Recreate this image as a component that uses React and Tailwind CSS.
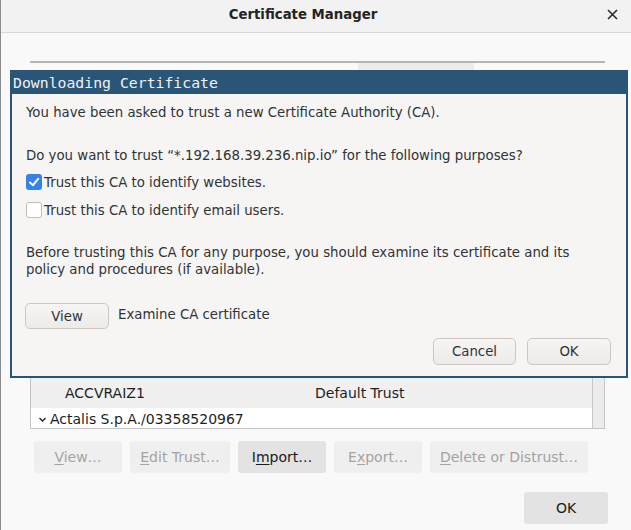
import React from "react";

const sans = { fontFamily: "'DejaVu Sans', 'Liberation Sans', sans-serif" };

const Mnemonic = ({ before, letter, after }) => (
  <span>
    {before}
    <span className="underline underline-offset-2">{letter}</span>
    {after}
  </span>
);

const ToolButton = ({ width, enabled, children }) => (
  <div
    className={`h-[32px] flex items-center justify-center rounded-[3px] text-[14px] ${width} ${
      enabled ? "bg-[#e3e3e3] text-[#1a1a1a]" : "bg-[#efefef] text-[#a3a3a3]"
    }`}
  >
    {children}
  </div>
);

const DialogButton = ({ width, children }) => (
  <div
    className={`flex items-center justify-center rounded-[5px] border border-[#cdc7c2] bg-gradient-to-b from-[#f6f5f4] to-[#edebe9] text-[#2e3436] text-[13.3px] ${width}`}
  >
    {children}
  </div>
);

const CheckRow = ({ checked, label }) => (
  <div className="flex items-center h-[20px]">
    {checked ? (
      <div className="w-[16px] h-[16px] rounded-[3px] bg-[#3584e4] flex items-center justify-center">
        <svg width="12" height="12" viewBox="0 0 12 12">
          <path d="M2 6.5 L5 9.2 L10.2 2.8" fill="none" stroke="white" strokeWidth="2" strokeLinecap="round" strokeLinejoin="round" />
        </svg>
      </div>
    ) : (
      <div className="w-[16px] h-[16px] rounded-[3px] bg-white border border-[#c0bdb8]" />
    )}
    <span className="ml-[2px]">{label}</span>
  </div>
);

export default function App() {
  return (
    <div className="relative w-[631px] h-[530px] bg-[#f9f9f9] border-l border-[#8c8c8c] overflow-hidden" style={sans}>
      {/* window title */}
      <div className="relative h-[33px] flex items-center justify-center border-b border-[#d9d9d9] bg-[#f2f2f2]">
        <span className="font-bold text-[13.3px] text-[#242424] -mt-[2px] -ml-[26px]">Certificate Manager</span>
        <svg className="absolute right-[13px] top-[9px]" width="11" height="11" viewBox="0 0 11 11">
          <path d="M1 1 L10 10 M10 1 L1 10" stroke="#2a2a2a" strokeWidth="1.6" />
        </svg>
      </div>

      {/* manager body */}
      <div className="pl-[29px] pr-[26px]">
        <div className="mt-[28px] border-t-2 border-[#b4b4b4]">
          <div className="ml-[328px] w-[116px] h-[9px] bg-[#ececec]" />
        </div>
        <div className="flex h-[357px] border-x border-b border-[#c4c4c4] bg-white">
          <div className="flex-1 flex flex-col text-[14px] text-[#1e1e1e]">
            <div className="flex-1 bg-[#f0f0f0]" />
            <div className="h-[30px] bg-[#f0f0f0] flex items-center">
              <span className="ml-[34px] w-[250px]">ACCVRAIZ1</span>
              <span>Default Trust</span>
            </div>
            <div className="h-[20px] flex items-center pt-[3px]">
              <svg className="ml-[7px] mr-[3px]" width="9" height="9" viewBox="0 0 9 9">
                <path d="M1.5 3 L4.5 6 L7.5 3" fill="none" stroke="#1e1e1e" strokeWidth="1.3" />
              </svg>
              <span>Actalis S.p.A./03358520967</span>
            </div>
          </div>
          <div className="w-[12px] bg-[#ececec] border-l border-[#c8c8c8]" />
        </div>

        <div className="flex gap-[8px] mt-[12px] ml-[4px]">
          <ToolButton width="w-[88px]">
            <Mnemonic letter="V" after="iew…" />
          </ToolButton>
          <ToolButton width="w-[100px]">
            <Mnemonic letter="E" after="dit Trust…" />
          </ToolButton>
          <ToolButton width="w-[88px]" enabled>
            <Mnemonic before="I" letter="m" after="port…" />
          </ToolButton>
          <ToolButton width="w-[88px]">
            <Mnemonic before="E" letter="x" after="port…" />
          </ToolButton>
          <ToolButton width="w-[158px]">
            <Mnemonic letter="D" after="elete or Distrust…" />
          </ToolButton>
        </div>

        <div className="flex justify-end mt-[19px] -mr-[3px]">
          <ToolButton width="w-[84px]" enabled>
            OK
          </ToolButton>
        </div>
      </div>

      {/* downloading certificate dialog */}
      <div className="absolute left-[9px] top-[70px] w-[618px] h-[308px] border-2 border-[#29557a] bg-[#f6f5f4] flex flex-col">
        <div
          className="h-[22px] bg-[#2a5577] text-[#eef2f6] text-[14.8px] leading-[22px] pl-[1px]"
          style={{ fontFamily: "'DejaVu Sans Mono', 'Liberation Mono', monospace" }}
        >
          Downloading Certificate
        </div>
        <div className="flex-1 pl-[14px] pr-[15px] pt-[10px] text-[13.3px] leading-[17px] text-[#2e3436]">
          <p>You have been asked to trust a new Certificate Authority (CA).</p>
          <p className="mt-[26px]">Do you want to trust “*.192.168.39.236.nip.io” for the following purposes?</p>
          <div className="mt-[8px] flex flex-col gap-[8px]">
            <CheckRow checked label="Trust this CA to identify websites." />
            <CheckRow label="Trust this CA to identify email users." />
          </div>
          <p className="mt-[24px]">
            Before trusting this CA for any purpose, you should examine its certificate and its
            <br />
            policy and procedures (if available).
          </p>
          <div className="mt-[25px] flex items-center">
            <DialogButton width="w-[84px] h-[26px] -ml-[1px]">View</DialogButton>
            <span className="ml-[9px] -mt-[4px]">Examine CA certificate</span>
          </div>
          <div className="mt-[9px] flex justify-end gap-[11px]">
            <DialogButton width="w-[83px] h-[27px]">Cancel</DialogButton>
            <DialogButton width="w-[84px] h-[27px]">OK</DialogButton>
          </div>
        </div>
      </div>
    </div>
  );
}
